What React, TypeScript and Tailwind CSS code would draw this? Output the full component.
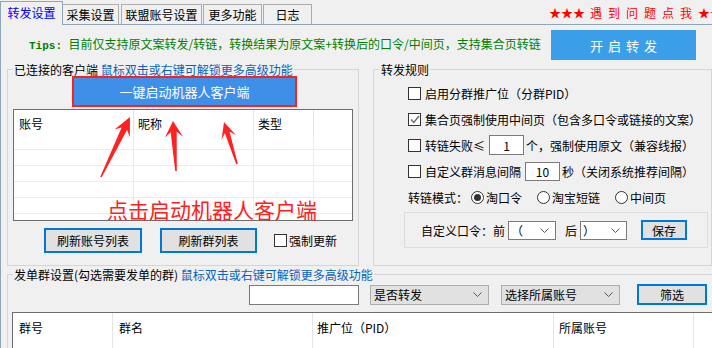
import React from 'react';

type Pt = [number, number];

// arrow polygon from tip to tail, head + tapered shaft
function arrowPoints(tip: Pt, tail: Pt, headLen: number, headW: number, neckW: number) {
	const dx = tail[0] - tip[0];
	const dy = tail[1] - tip[1];
	const len = Math.hypot(dx, dy);
	const ux = dx / len;
	const uy = dy / len;
	const px = -uy;
	const py = ux;
	const base: Pt = [tip[0] + ux * headLen, tip[1] + uy * headLen];
	const neck: Pt = [tip[0] + ux * (headLen - 5), tip[1] + uy * (headLen - 5)];
	const pts: Pt[] = [
		tip,
		[base[0] + (px * headW) / 2, base[1] + (py * headW) / 2],
		[neck[0] + (px * neckW) / 2, neck[1] + (py * neckW) / 2],
		[tail[0] + px * 0.8, tail[1] + py * 0.8],
		[tail[0] - px * 0.8, tail[1] - py * 0.8],
		[neck[0] - (px * neckW) / 2, neck[1] - (py * neckW) / 2],
		[base[0] - (px * headW) / 2, base[1] - (py * headW) / 2],
	];
	return pts.map((p) => `${p[0].toFixed(1)},${p[1].toFixed(1)}`).join(' ');
}

function CheckBox({ checked }: { checked?: boolean }) {
	return (
		<span className="w-[13px] h-[13px] border border-[#333] bg-white flex items-center justify-center shrink-0">
			{checked && (
				<svg width="10" height="9" viewBox="0 0 10 9">
					<polyline points="1,4.5 3.8,7.5 9,1" fill="none" stroke="#6a6a6a" strokeWidth="1.4" />
				</svg>
			)}
		</span>
	);
}

function Radio({ on }: { on?: boolean }) {
	return (
		<span className="w-[13px] h-[13px] rounded-full border border-[#333] bg-white flex items-center justify-center shrink-0">
			{on && <span className="w-[7px] h-[7px] rounded-full bg-[#333]" />}
		</span>
	);
}

function Chevron() {
	return (
		<svg width="9" height="5" viewBox="0 0 9 5">
			<polyline points="0.5,0.5 4.5,4.5 8.5,0.5" fill="none" stroke="#555" strokeWidth="1" />
		</svg>
	);
}

function Combo({ text, w }: { text: string; w: string }) {
	return (
		<div className={`${w} h-[20px] border border-[#adadad] bg-[#e1e1e1] flex items-center justify-between pl-[3px] pr-[6px]`}>
			<span>{text}</span>
			<Chevron />
		</div>
	);
}

function WinButton({ children, w, h }: { children: React.ReactNode; w: string; h: string }) {
	return (
		<div className={`${w} ${h} border-2 border-[#0078d7] bg-[#e1e1e1] flex items-center justify-center text-black`}>
			{children}
		</div>
	);
}

export default function App() {
	const rows = [0, 1, 2, 3, 4, 5];
	const helpChars = ['遇', '到', '问', '题', '点', '我'];

	return (
		<div className="relative w-[712px] h-[348px] overflow-hidden bg-[#f0f0f0] text-[12px] leading-[15px] text-black font-['Noto_Sans_CJK_SC',sans-serif]">
			{/* Tabs */}
			<div className="flex items-end h-[24px] whitespace-nowrap">
				<div className="relative z-10 -mb-px shrink-0 w-[63px] h-[24px] border-t border-l border-r border-[#8fa5b8] bg-[#f0f0f0] flex items-center justify-center text-[#0000ff] text-[12px] pb-[2px]">
					转发设置
				</div>
				<div className="shrink-0 w-[56px] h-[20px] border-t border-r border-[#acacac] flex items-center justify-center">
					采集设置
				</div>
				<div className="shrink-0 ml-[2px] w-[81px] h-[20px] border-t border-l border-r border-[#acacac] flex items-center justify-center">
					联盟账号设置
				</div>
				<div className="shrink-0 ml-[1px] w-[59px] h-[20px] border-t border-l border-r border-[#acacac] flex items-center justify-center">
					更多功能
				</div>
				<div className="shrink-0 ml-[1px] w-[49px] h-[20px] border-t border-l border-r border-[#acacac] flex items-center justify-center">
					日志
				</div>
				<div className="ml-[237px] self-center flex items-center text-[#ff0000] pt-[1px] shrink-0">
					<span className="w-[12px] text-center">★</span>
					<span className="w-[12px] text-center">★</span>
					<span className="w-[12px] text-center">★</span>
					<span className="w-[5px]" />
					{helpChars.map((c) => (
						<span key={c} className="w-[18px] shrink-0">{c}</span>
					))}
					<span className="w-[12px] text-center">★</span>
					<span className="w-[12px] text-center">★</span>
				</div>
			</div>

			{/* Pane */}
			<div className="border-l border-t border-[#8fa5b8] h-[324px]">
				{/* Tips */}
				<div className="flex items-center pt-[5px] pl-[28px]">
					<span className="text-[#008000] whitespace-nowrap">
						<span className="font-['Liberation_Mono',monospace] font-bold text-[11px]">Tips: </span>
						目前仅支持原文案转发/转链，转换结果为原文案+转换后的口令/中间页，支持集合页转链
					</span>
					<div className="ml-auto mr-[16px] w-[145px] h-[30px] bg-[#3a9fe8] text-white text-[13px] tracking-[5px] flex items-center justify-center pl-[5px]">
						开启转发
					</div>
				</div>

				{/* Middle */}
				<div className="flex mt-[2px]">
					<fieldset className="ml-[6px] w-[354px] border border-[#d5d5d5] p-0 m-0">
						<legend className="ml-[5px] px-[1px] leading-[15px]">
							已连接的客户端 <span className="text-[#0563c1]">鼠标双击或右键可解锁更多高级功能</span>
						</legend>
						<div className="px-[5px] pb-[12px]">
							<div className="-mt-px ml-[59px] w-[225px] h-[31px] border-2 border-[#ff1f1f] bg-[#ff1f1f] p-0">
								<div className="w-full h-full bg-[#3d8fe8] flex items-center justify-center text-white text-[13px]">
									一键启动机器人客户端
								</div>
							</div>
							<div className="mt-[2px] w-[340px] h-[112px] border border-[#6d6d6d] bg-white overflow-hidden">
								<div className="grid grid-cols-[120px_120px_60px_1fr] h-[24px]">
									<div className="border-r border-[#e5e5e5] pl-[5px] pt-[6px]">账号</div>
									<div className="border-r border-[#e5e5e5] pl-[4px] pt-[6px]">昵称</div>
									<div className="border-r border-[#e5e5e5] pl-[4px] pt-[6px]">类型</div>
									<div />
								</div>
								{rows.map((r) => (
									<div key={r} className="grid grid-cols-[120px_120px_60px_1fr] h-[16px] border-b border-[#ececec]">
										<div className="border-r border-[#ececec]" />
										<div className="border-r border-[#ececec]" />
										<div className="border-r border-[#ececec]" />
										<div />
									</div>
								))}
							</div>
							<div className="mt-[7px] flex items-center">
								<div className="ml-[31px]">
									<WinButton w="w-[98px]" h="h-[25px]">刷新账号列表</WinButton>
								</div>
								<div className="ml-[18px]">
									<WinButton w="w-[97px]" h="h-[25px]">刷新群列表</WinButton>
								</div>
								<div className="ml-[17px] flex items-center gap-[2px]">
									<CheckBox />
									<span>强制更新</span>
								</div>
							</div>
						</div>
					</fieldset>

					<fieldset className="ml-[14px] w-[345px] border border-[#d5d5d5] p-0 m-0">
						<legend className="ml-[6px] px-[1px] leading-[15px]">转发规则</legend>
						<div className="pl-[34px] pt-[3px] pb-[17px] whitespace-nowrap">
							<div className="h-[26px] flex items-center gap-[4px]">
								<CheckBox />
								<span>启用分群推广位（分群PID）</span>
							</div>
							<div className="h-[26px] flex items-center gap-[4px]">
								<CheckBox checked />
								<span>集合页强制使用中间页（包含多口令或链接的文案）</span>
							</div>
							<div className="h-[26px] flex items-center">
								<CheckBox />
								<span className="ml-[4px]">转链失败≤</span>
								<div className="ml-[4px] w-[35px] h-[20px] border border-[#7a7a7a] bg-white flex items-center justify-center">1</div>
								<span className="ml-[2px]">个，强制使用原文（兼容线报）</span>
							</div>
							<div className="h-[26px] flex items-center">
								<CheckBox />
								<span className="ml-[4px]">自定义群消息间隔</span>
								<div className="ml-[4px] w-[35px] h-[19px] border border-[#7a7a7a] bg-white flex items-center justify-center">10</div>
								<span className="ml-[2px]">秒（关闭系统推荐间隔）</span>
							</div>
							<div className="h-[26px] flex items-center">
								<span>转链模式：</span>
								<span className="ml-[3px]"><Radio on /></span>
								<span className="ml-[2px]">淘口令</span>
								<span className="ml-[15px]"><Radio /></span>
								<span className="ml-[2px]">淘宝短链</span>
								<span className="ml-[15px]"><Radio /></span>
								<span className="ml-[2px]">中间页</span>
							</div>
							<div className="mt-[2px] -ml-[4px] w-[304px] h-[36px] border border-[#dcdcdc] flex items-center pl-[16px]">
								<span>自定义口令：前</span>
								<div className="ml-[3px] w-[48px] h-[19px] border border-[#7a7a7a] bg-white flex items-center justify-between pl-[2px] pr-[6px]">
									<span>（</span>
									<Chevron />
								</div>
								<span className="ml-[9px]">后</span>
								<div className="ml-[3px] w-[47px] h-[19px] border border-[#7a7a7a] bg-white flex items-center justify-between pl-[2px] pr-[6px]">
									<span>）</span>
									<Chevron />
								</div>
								<div className="ml-[14px]">
									<WinButton w="w-[46px]" h="h-[20px]">保存</WinButton>
								</div>
							</div>
						</div>
					</fieldset>
				</div>

				{/* Bottom */}
				<fieldset className="ml-[6px] mt-[1px] w-[720px] border border-[#d5d5d5] p-0 m-0">
					<legend className="ml-[5px] px-[1px] leading-[15px]">
						发单群设置(勾选需要发单的群) <span className="text-[#0563c1]">鼠标双击或右键可解锁更多高级功能</span>
					</legend>
					<div className="pl-[4px]">
						<div className="mt-[2px] flex items-center">
							<div className="ml-[237px] w-[110px] h-[20px] border border-[#7a7a7a] bg-white" />
							<div className="ml-[11px]">
								<Combo text="是否转发" w="w-[119px]" />
							</div>
							<div className="ml-[12px]">
								<Combo text="选择所属账号" w="w-[119px]" />
							</div>
							<div className="ml-[17px]">
								<WinButton w="w-[70px]" h="h-[21px]">筛选</WinButton>
							</div>
						</div>
						<div className="mt-[7px] w-[720px] h-[60px] border-l border-t border-[#6d6d6d] bg-white">
							<div className="grid grid-cols-[100px_200px_241px_140px_1fr] h-[60px]">
								<div className="border-r border-[#e5e5e5] pl-[6px] pt-[7px]">群号</div>
								<div className="border-r border-[#e5e5e5] pl-[6px] pt-[7px]">群名</div>
								<div className="border-r border-[#e5e5e5] pl-[4px] pt-[7px]">推广位（PID）</div>
								<div className="border-r border-[#e5e5e5] pl-[5px] pt-[7px]">所属账号</div>
								<div />
							</div>
						</div>
					</div>
				</fieldset>
			</div>

			{/* Red annotation overlay */}
			<svg className="absolute inset-0 pointer-events-none" width="712" height="348" viewBox="0 0 712 348">
				<polygon points={arrowPoints([130, 117], [101, 177], 18, 17, 6)} fill="#ff2222" />
				<polygon points={arrowPoints([173, 121], [176, 171], 16, 18, 6)} fill="#ff2222" />
				<polygon points={arrowPoints([224, 122], [237, 164], 16, 15, 5)} fill="#ff2222" />
			</svg>
			<div className="absolute left-[107px] top-[197px] text-[21px] leading-[24px] text-[#ff2020] whitespace-nowrap pointer-events-none">
				点击启动机器人客户端
			</div>
		</div>
	);
}
